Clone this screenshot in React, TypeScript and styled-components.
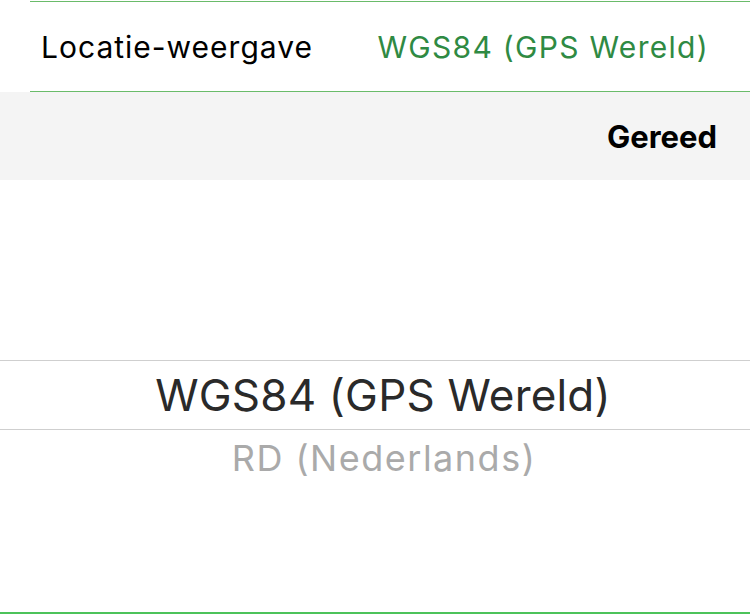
import React from "react";
import styled, { createGlobalStyle } from "styled-components";

const Global = createGlobalStyle`
  html, body { margin: 0; padding: 0; background: #fff; }
  body { width: 750px; height: 614px; overflow: hidden; font-family: Inter, "Liberation Sans", sans-serif; }
`;

const Screen = styled.div`
  width: 750px;
  height: 614px;
  display: flex;
  flex-direction: column;
  background: #fff;
`;

const Separator = styled.div<{ $inset: number; $color: string; $h?: number }>`
  height: ${(p) => p.$h ?? 1}px;
  margin-left: ${(p) => p.$inset}px;
  background: ${(p) => p.$color};
  flex: none;
`;

const TopGap = styled.div`
  height: 1px;
  flex: none;
`;

const SettingRow = styled.div`
  height: 89px;
  display: flex;
  align-items: center;
  justify-content: space-between;
  padding: 0 41px 0 41px;
  flex: none;
`;

const Label = styled.span`
  font-size: 30px;
  color: #000;
  letter-spacing: 1px;
`;

const Value = styled.span`
  font-size: 30px;
  color: #2f8a43;
  letter-spacing: 1.3px;
`;

const Toolbar = styled.div`
  height: 88px;
  background: #f4f4f4;
  display: flex;
  align-items: center;
  justify-content: flex-end;
  padding-right: 33px;
  flex: none;
`;

const DoneButton = styled.span`
  font-size: 31px;
  font-weight: 700;
  color: #000;
`;

const Picker = styled.div`
  flex: 1;
  display: flex;
  flex-direction: column;
`;

const PickerSpacer = styled.div<{ $h: number }>`
  height: ${(p) => p.$h}px;
  flex: none;
`;

const SelectedRow = styled.div`
  height: 68px;
  border-top: 1px solid #cfcfcf;
  border-bottom: 1px solid #cfcfcf;
  display: flex;
  align-items: center;
  justify-content: center;
  padding-left: 16px;
  font-size: 44px;
  letter-spacing: 0.2px;
  color: #2a2a2a;
  flex: none;
`;

const OptionRow = styled.div`
  height: 60px;
  display: flex;
  align-items: flex-start;
  justify-content: center;
  padding: 6px 0 0 18px;
  font-size: 36px;
  letter-spacing: 1.5px;
  color: #aaaaaa;
  flex: none;
  box-sizing: border-box;
`;

const Fill = styled.div`
  flex: 1;
`;

export default function App() {
  return (
    <>
      <Global />
      <Screen>
        <TopGap />
        <Separator $inset={30} $color="#6abb6a" />
        <SettingRow>
          <Label>Locatie-weergave</Label>
          <Value>WGS84 (GPS Wereld)</Value>
        </SettingRow>
        <Separator $inset={30} $color="#6abb6a" />
        <Toolbar>
          <DoneButton>Gereed</DoneButton>
        </Toolbar>
        <Picker>
          <PickerSpacer $h={180} />
          <SelectedRow>WGS84 (GPS Wereld)</SelectedRow>
          <OptionRow>RD (Nederlands)</OptionRow>
          <Fill />
          <Separator $inset={0} $color="#4cc35a" $h={2} />
        </Picker>
      </Screen>
    </>
  );
}
